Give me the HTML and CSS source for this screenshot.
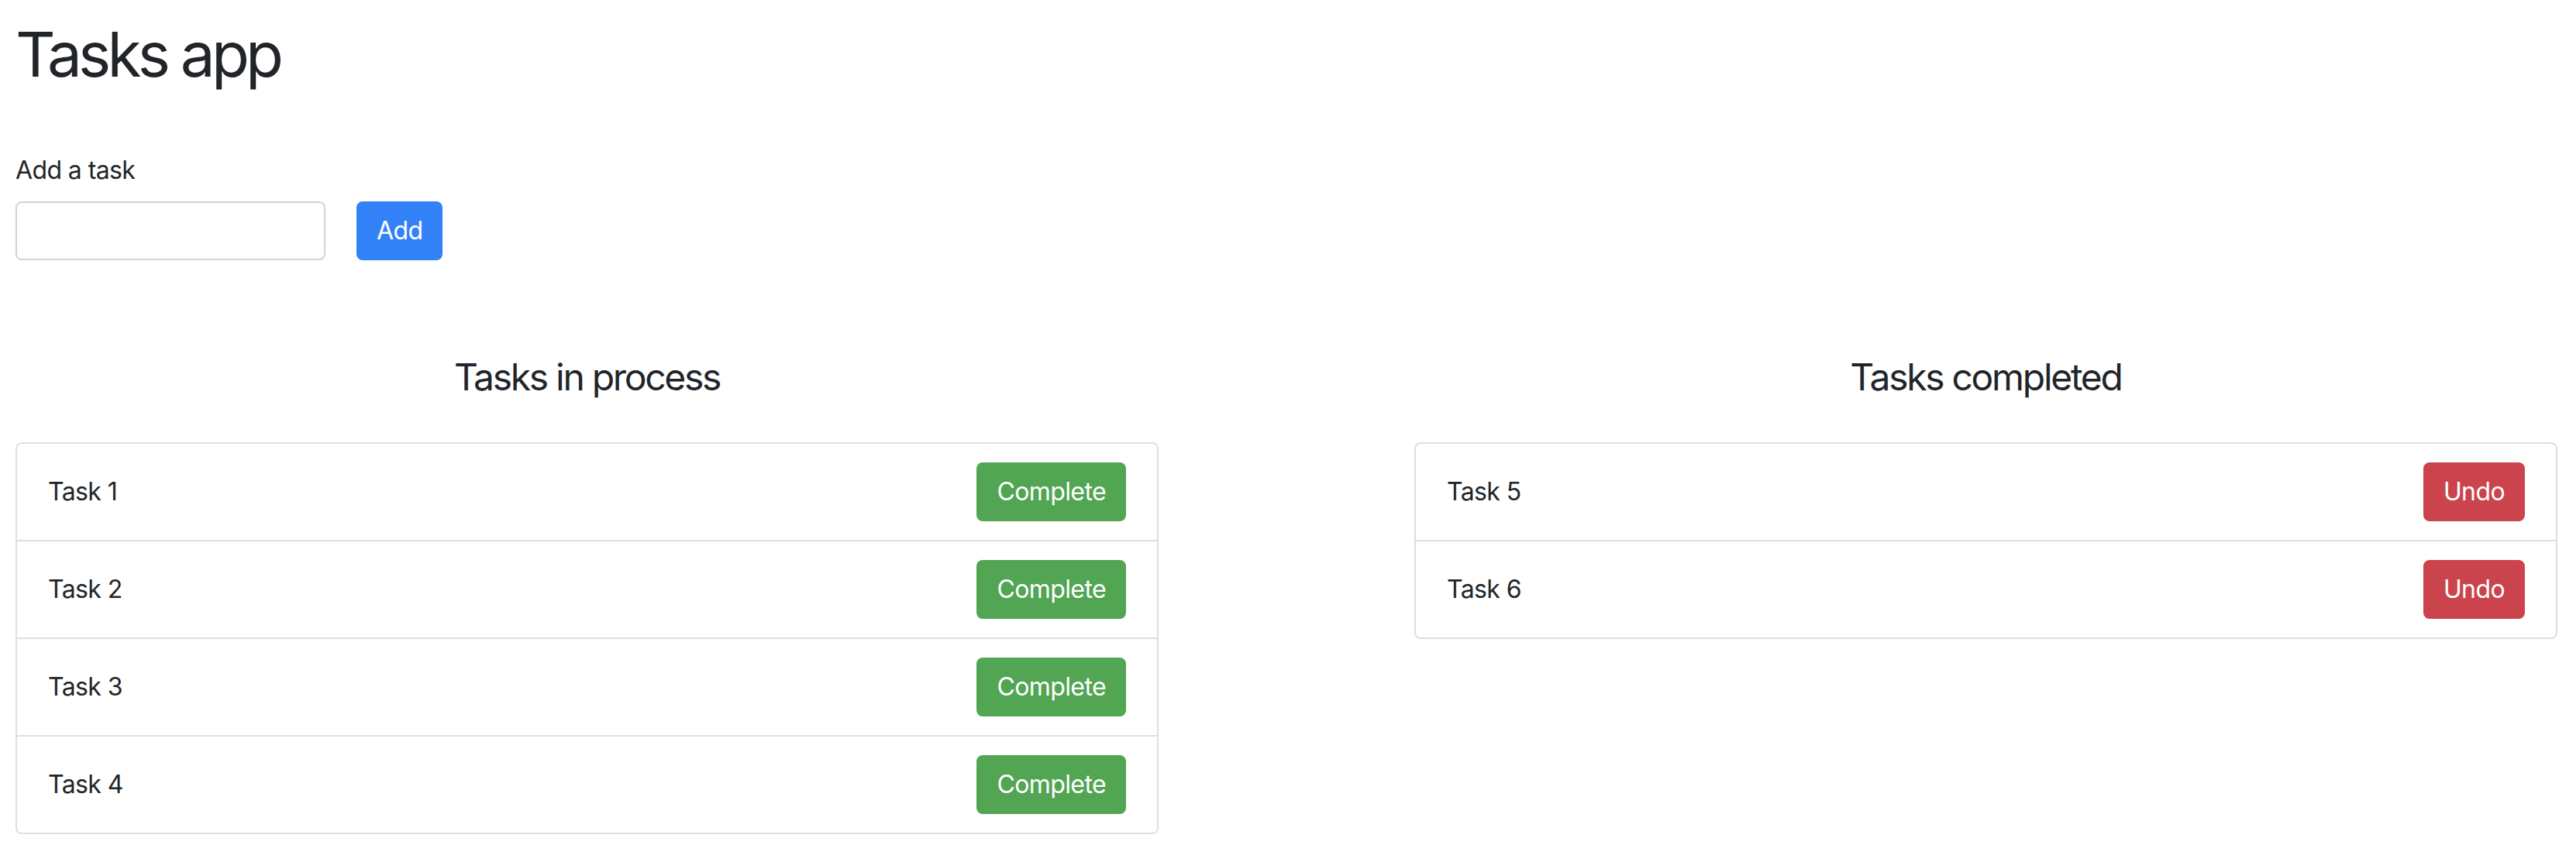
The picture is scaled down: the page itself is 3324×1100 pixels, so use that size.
FILE: index.html
```html
<!DOCTYPE html>
<html lang="en">
<head>
<meta charset="utf-8">
<title>Tasks app</title>
<link rel="stylesheet" href="styles.css">
</head>
<body>
<div class="app">
  <h1 class="title">Tasks app</h1>
  <form class="add-form">
    <label class="add-label" for="task">Add a task</label>
    <div class="add-row">
      <input class="add-input" id="task" type="text">
      <button class="btn btn-primary" type="button">Add</button>
    </div>
  </form>
  <div class="columns">
    <section class="column">
      <h4 class="column-title">Tasks in process</h4>
      <ul class="list">
        <li class="list-item"><span>Task 1</span><button class="btn btn-success" type="button">Complete</button></li>
        <li class="list-item"><span>Task 2</span><button class="btn btn-success" type="button">Complete</button></li>
        <li class="list-item"><span>Task 3</span><button class="btn btn-success" type="button">Complete</button></li>
        <li class="list-item"><span>Task 4</span><button class="btn btn-success" type="button">Complete</button></li>
      </ul>
    </section>
    <section class="column">
      <h4 class="column-title">Tasks completed</h4>
      <ul class="list">
        <li class="list-item"><span>Task 5</span><button class="btn btn-danger" type="button">Undo</button></li>
        <li class="list-item"><span>Task 6</span><button class="btn btn-danger" type="button">Undo</button></li>
      </ul>
    </section>
  </div>
</div>
</body>
</html>
```

FILE: styles.css
```css
* {
  box-sizing: border-box;
}

html, body {
  margin: 0;
  padding: 0;
  background: #ffffff;
}

body {
  font-family: "Inter", "Liberation Sans", sans-serif;
  font-size: 32px;
  line-height: 48px;
  color: #212529;
  letter-spacing: -0.6px;
}

.app {
  padding: 22px 20px 20px 20px;
}

.title {
  margin: 0 0 78px 0;
  font-size: 80px;
  line-height: 96px;
  font-weight: 400;
  letter-spacing: -4.8px;
}

.add-form {
  margin: 0;
}

.add-label {
  display: block;
  margin-bottom: 16px;
}

.add-row {
  display: flex;
  align-items: center;
  gap: 40px;
}

.add-input {
  width: 400px;
  height: 76px;
  border: 2px solid #ced4da;
  border-radius: 8px;
  padding: 12px 24px;
  font: inherit;
  color: #495057;
  background: #fff;
}

.btn {
  display: inline-block;
  font-family: inherit;
  font-size: 32px;
  line-height: 48px;
  letter-spacing: -0.6px;
  padding: 12px 24px;
  border: 2px solid transparent;
  border-radius: 8px;
  color: #ffffff;
  cursor: pointer;
}

.btn-primary {
  background: #3381f6;
  border-color: #3381f6;
}

.btn-success {
  background: #52a552;
  border-color: #52a552;
}

.btn-danger {
  background: #cb444d;
  border-color: #cb444d;
}

.columns {
  display: grid;
  grid-template-columns: 1475px 1475px;
  column-gap: 330px;
  margin-top: 122px;
  align-items: start;
}

.column-title {
  margin: 0 0 55px 0;
  font-size: 48px;
  line-height: 58px;
  font-weight: 400;
  text-align: center;
  letter-spacing: -2.3px;
}

.list {
  list-style: none;
  margin: 0;
  padding: 0;
  border: 2px solid #dfdfdf;
  border-radius: 8px;
}

.list-item {
  display: flex;
  align-items: center;
  justify-content: space-between;
  padding: 24px 40px;
}

.list-item + .list-item {
  border-top: 2px solid #dfdfdf;
}
```
